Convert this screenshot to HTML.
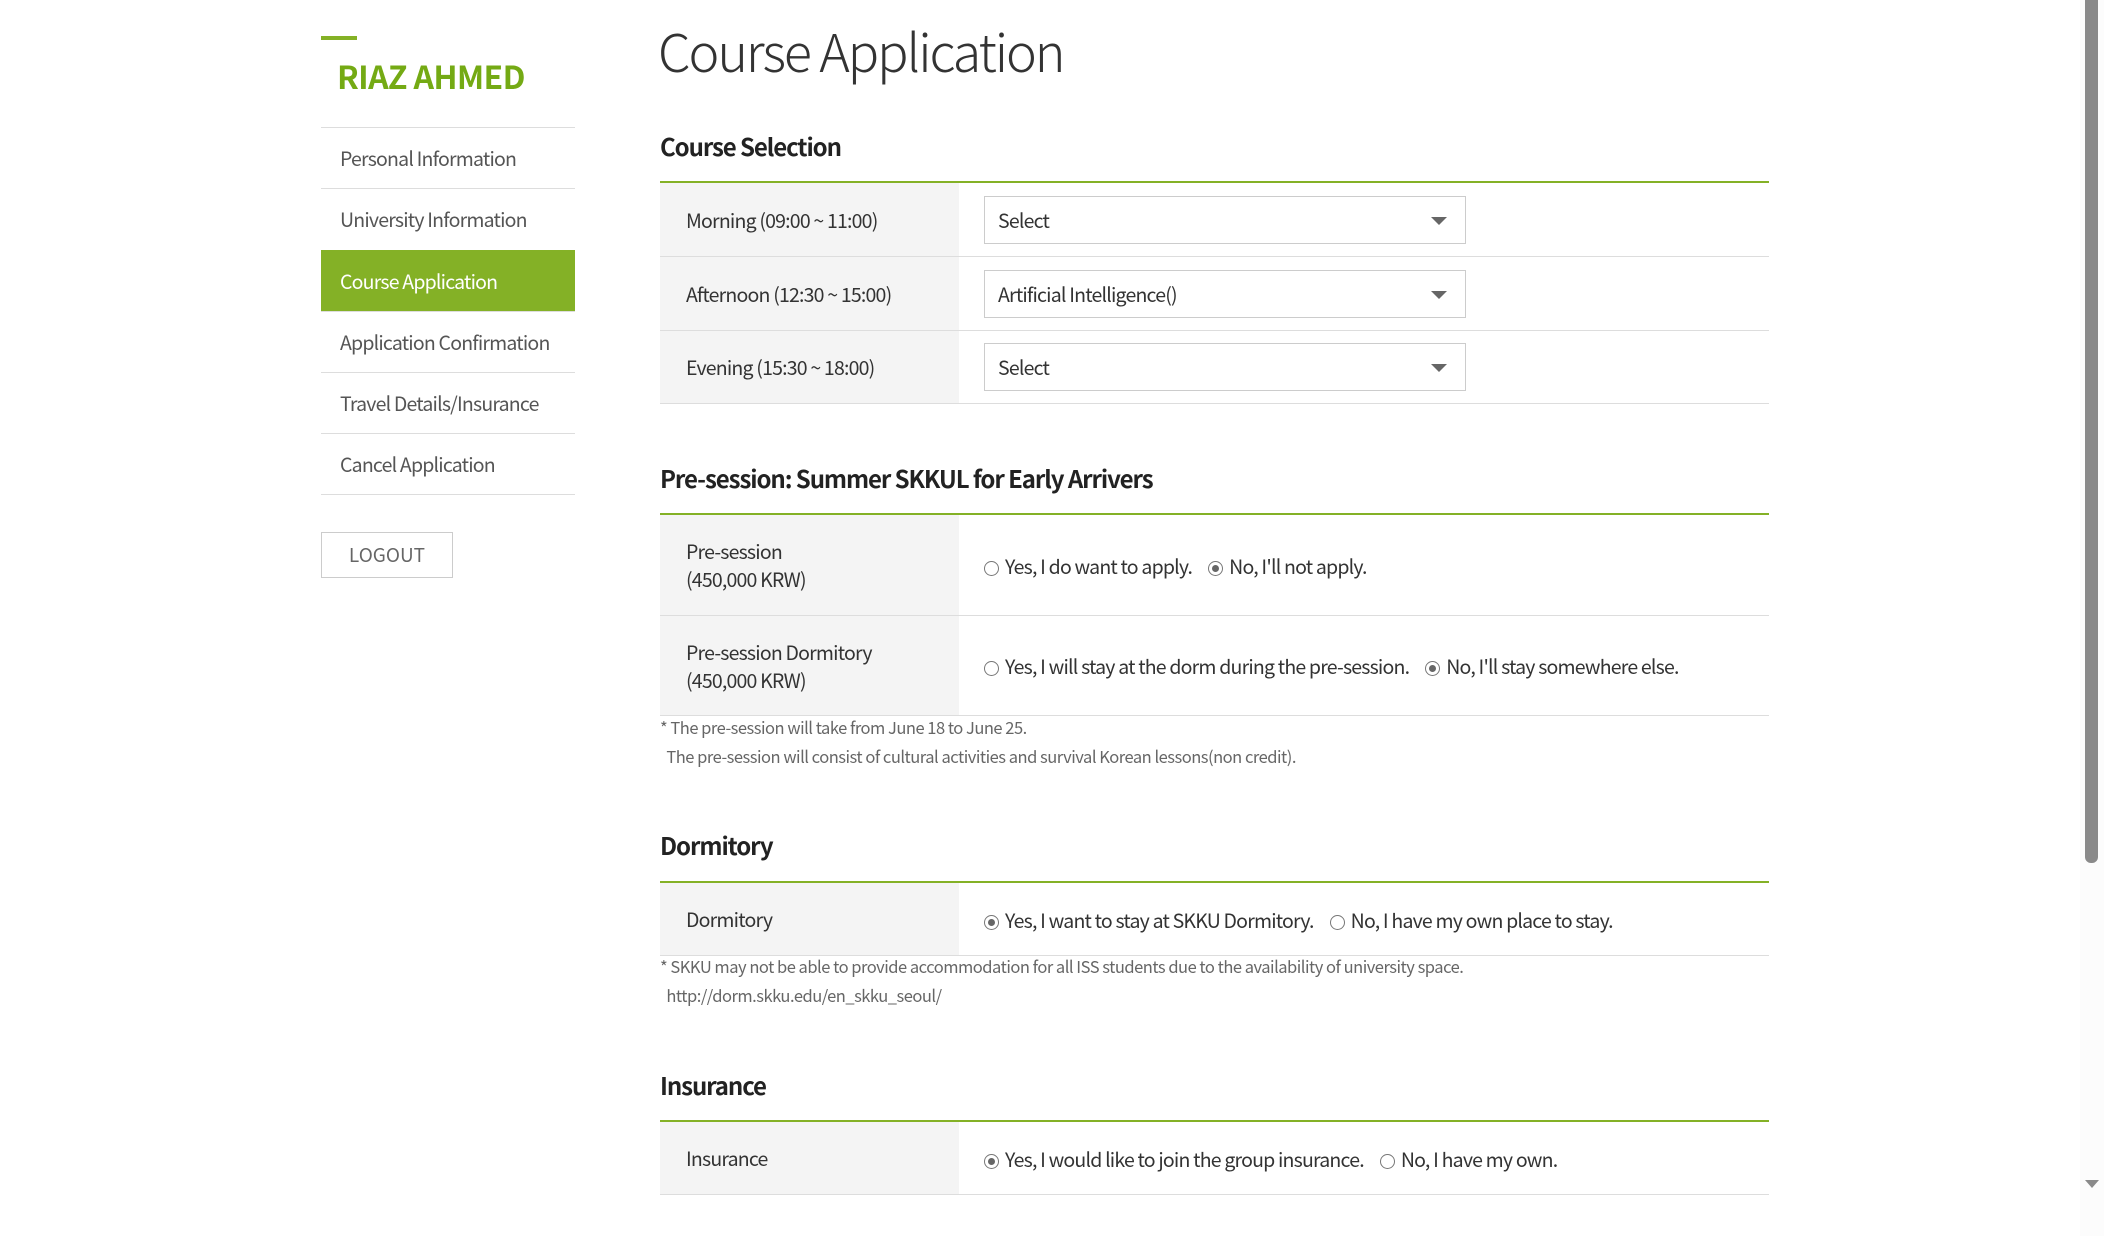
<!DOCTYPE html>
<html><head><meta charset="utf-8"><style>
*{margin:0;padding:0;box-sizing:border-box}
body{width:2104px;height:1236px;overflow:hidden;background:#fff;font-family:"Noto Sans CJK KR","Liberation Sans",sans-serif;color:#333;position:relative;letter-spacing:-0.05em}
.a{position:absolute}
.dash{left:321px;top:36px;width:36px;height:4px;background:#84b126}
.name{left:337px;top:53px;font-size:32px;font-weight:700;color:#74aa14;letter-spacing:-0.02em}
.nav{left:321px;top:127px;width:254px}
.nav div{height:61.3px;border-top:1px solid #ddd;font-size:19.5px;color:#555;padding-left:19px;line-height:59px}
.nav div:last-child{border-bottom:1px solid #ddd}
.nav .on{background:#84b126;color:#fff;border-top-color:#84b126}
.logout{left:321px;top:532px;width:132px;height:46px;border:1px solid #ccc;font-size:19px;color:#666;text-align:center;line-height:44px;letter-spacing:0}
.title{left:658px;top:12px;font-size:52px;font-weight:300;color:#333;letter-spacing:-0.04em}
.h{left:660px;font-size:24px;font-weight:700;color:#222;letter-spacing:-0.045em}
.tbl{left:660px;width:1109px;border-top:2px solid #84b126}
.row{display:flex;border-bottom:1px solid #ddd}
.lab{width:299px;background:#f4f4f4;padding-left:26px;font-size:19.5px;display:flex;align-items:center;line-height:28px}
.val{flex:1;padding-left:25px;display:flex;align-items:center;font-size:19.5px}
.sel{width:482px;height:48px;border:1px solid #ccc;padding-left:13px;line-height:46px;position:relative}
.sel:after{content:"";position:absolute;right:18px;top:20px;border-left:8px solid transparent;border-right:8px solid transparent;border-top:8px solid #666}
.r{display:inline-block;width:15px;height:15px;border:1px solid #777;border-radius:50%;margin-right:6px;vertical-align:-2px;position:relative}
.r.c:after{content:"";position:absolute;left:3px;top:3px;width:7px;height:7px;border-radius:50%;background:#666}
.opt{margin-right:16px}
.note{left:660px;font-size:16.5px;color:#666;line-height:29px;letter-spacing:-0.03em}
.sb{left:2085px;top:0;width:13px;height:863px;background:#8a8a8a;border-radius:0 0 6px 6px}
.tr{left:2080px;top:0;width:24px;height:1236px;background:#fcfcfc}
.arr{left:2085px;top:1180px;border-left:7px solid transparent;border-right:7px solid transparent;border-top:8px solid #8a8a8a}
</style></head><body>
<div class="a tr"></div><div class="a sb"></div><div class="a arr"></div>
<div class="a dash"></div>
<div class="a name">RIAZ AHMED</div>
<div class="a nav">
<div>Personal Information</div><div>University Information</div><div class="on">Course Application</div><div>Application Confirmation</div><div>Travel Details/Insurance</div><div>Cancel Application</div>
</div>
<div class="a logout">LOGOUT</div>
<div class="a title">Course Application</div>

<div class="a h" style="top:128px">Course Selection</div>
<div class="a tbl" style="top:181px">
<div class="row" style="height:74px"><div class="lab">Morning (09:00 ~ 11:00)</div><div class="val"><div class="sel">Select</div></div></div>
<div class="row" style="height:74px"><div class="lab">Afternoon (12:30 ~ 15:00)</div><div class="val"><div class="sel">Artificial Intelligence()</div></div></div>
<div class="row" style="height:73px"><div class="lab">Evening (15:30 ~ 18:00)</div><div class="val"><div class="sel">Select</div></div></div>
</div>

<div class="a h" style="top:460px">Pre-session: Summer SKKUL for Early Arrivers</div>
<div class="a tbl" style="top:513px">
<div class="row" style="height:101px"><div class="lab">Pre-session<br>(450,000 KRW)</div><div class="val"><span class="opt"><span class="r"></span>Yes, I do want to apply.</span><span><span class="r c"></span>No, I'll not apply.</span></div></div>
<div class="row" style="height:100px"><div class="lab">Pre-session Dormitory<br>(450,000 KRW)</div><div class="val"><span class="opt"><span class="r"></span>Yes, I will stay at the dorm during the pre-session.</span><span><span class="r c"></span>No, I'll stay somewhere else.</span></div></div>
</div>
<div class="a note" style="top:713px">* The pre-session will take from June 18 to June 25.<br>&nbsp;&nbsp;The pre-session will consist of cultural activities and survival Korean lessons(non credit).</div>

<div class="a h" style="top:827px">Dormitory</div>
<div class="a tbl" style="top:881px">
<div class="row" style="height:73px"><div class="lab">Dormitory</div><div class="val"><span class="opt"><span class="r c"></span>Yes, I want to stay at SKKU Dormitory.</span><span><span class="r"></span>No, I have my own place to stay.</span></div></div>
</div>
<div class="a note" style="top:952px">* SKKU may not be able to provide accommodation for all ISS students due to the availability of university space.<br>&nbsp;&nbsp;http://dorm.skku.edu/en_skku_seoul/</div>

<div class="a h" style="top:1067px">Insurance</div>
<div class="a tbl" style="top:1120px">
<div class="row" style="height:73px"><div class="lab">Insurance</div><div class="val"><span class="opt"><span class="r c"></span>Yes, I would like to join the group insurance.</span><span><span class="r"></span>No, I have my own.</span></div></div>
</div>
</body></html>
